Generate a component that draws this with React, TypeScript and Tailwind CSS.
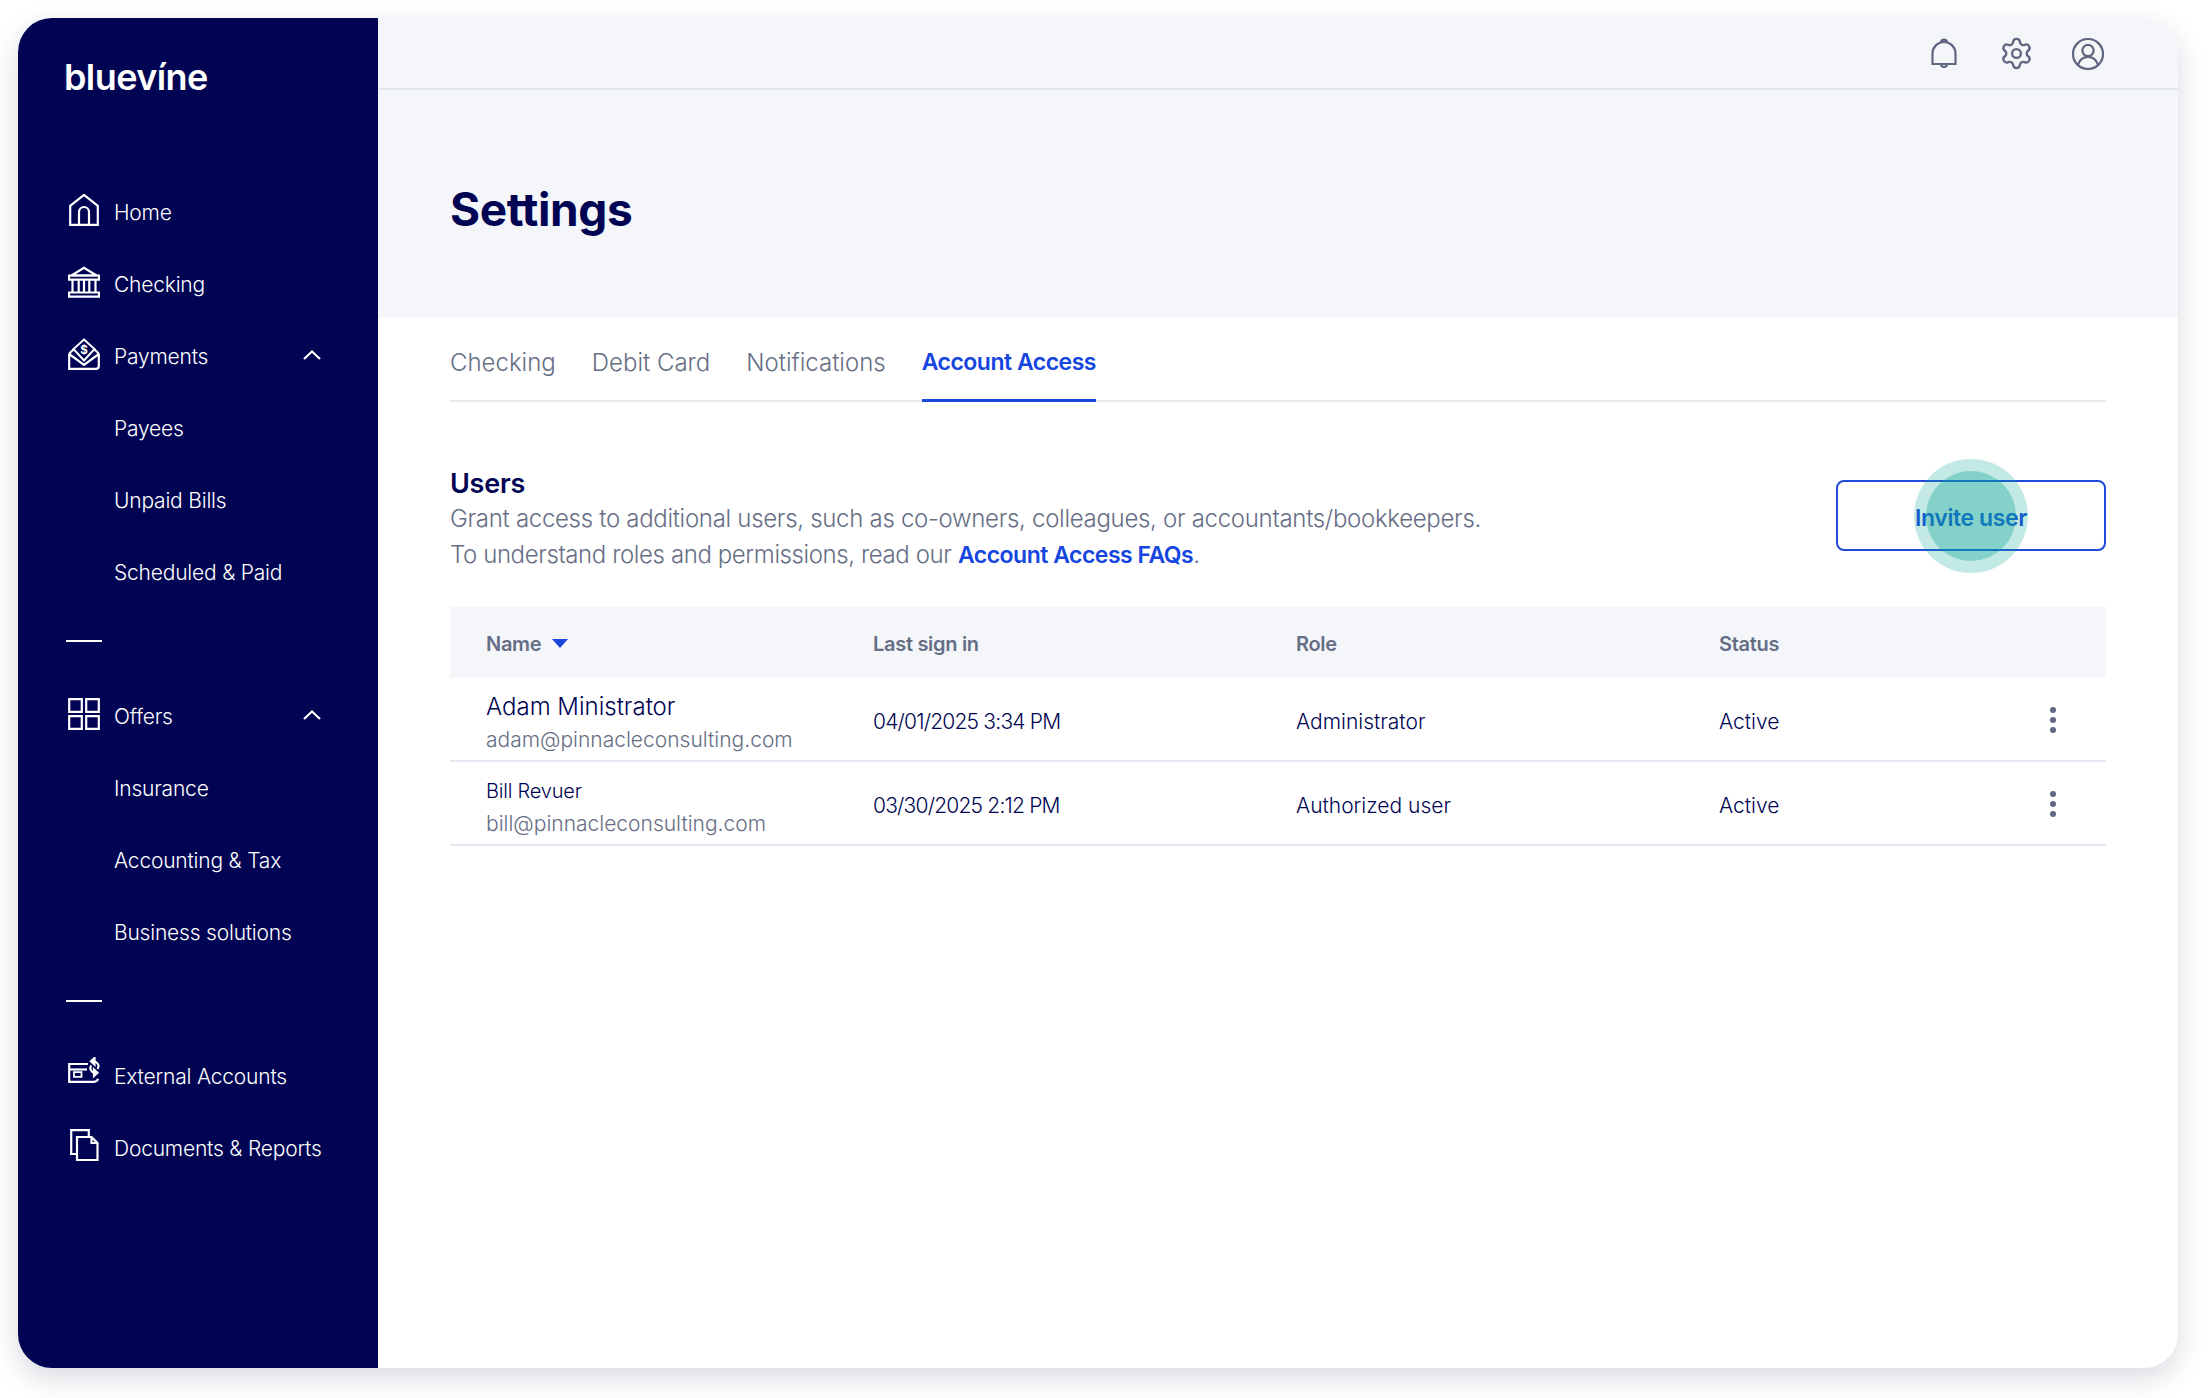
import { Settings } from "lucide-react";

const NAVY = "#000453";

function Svg({ children, w = 32, h = 32, className = "" }: { children: React.ReactNode; w?: number; h?: number; className?: string }) {
  return (
    <svg width={w} height={h} viewBox={`0 0 ${w} ${h}`} fill="none" stroke="currentColor" strokeWidth={2.2} className={`shrink-0 ${className}`}>
      {children}
    </svg>
  );
}

const HomeIcon = () => (
  <Svg>
    <path d="M2.2 30.8V11.8L16 .9l13.8 10.9v19z" />
    <path d="M11 30.8V18a5 5 0 0 1 10 0v12.8" />
  </Svg>
);
const BankIcon = () => (
  <Svg>
    <path d="M3.5 9.5 16 1.8l12.5 7.7z" />
    <path d="M1 9.5h30v4.2H1z" />
    <path d="M1 26.5h30v4.2H1z" />
    <path d="M4.5 13.7v12.8M10.7 13.7v12.8M16 13.7v12.8M21.3 13.7v12.8M27.5 13.7v12.8" />
  </Svg>
);
const PayIcon = () => (
  <Svg>
    <path d="M1.2 15.5v15.3H28a2.8 2.8 0 0 0 2.8-2.8V15.5" />
    <path d="m1.2 15.5 4.6-4.2M30.8 15.5l-4.6-4.2" />
    <path d="M1.2 16 16 27l14.8-11" />
    <path d="M16 1.5 26.5 11 16 22.5 5.5 11z" strokeWidth={2} />
    <text x="16" y="16" textAnchor="middle" fontSize="11.5" fontWeight="700" fill="currentColor" stroke="none" fontFamily="Inter,sans-serif">$</text>
  </Svg>
);
const GridIcon = () => (
  <Svg>
    <path d="M1.2 1.2h12.6v12.6H1.2zM18.2 1.2h12.6v12.6H18.2zM1.2 18.2h12.6v12.6H1.2zM18.2 18.2h12.6v12.6H18.2z" />
  </Svg>
);
const ExternalIcon = () => (
  <Svg h={26} className="mb-[8px]">
    <path d="M20 7H1.2v17.8H26c2.2 0 3.4-1 4-3" />
    <path d="M1.2 12.5H19" />
    <path d="M6 15.2h7.5v4.6H6z" strokeWidth={1.8} />
    <path d="M29.5 12c2-3.2.8-6.6-3.4-7.8" />
    <path d="M26.5 1 23 4.2l3.5 3.2z" fill="currentColor" />
    <path d="M23 8.5c-1.7 3 0 6.4 3.6 7.2" />
    <path d="m26 19 3.5-3.2L26 12.6z" fill="currentColor" />
  </Svg>
);
const DocsIcon = () => (
  <Svg className="mb-[3px]">
    <path d="M9 25H3.2V1.2h17.6V8" />
    <path d="M9 8h14.5l6 6v17H9z" />
    <path d="M23.5 8v6h6" />
  </Svg>
);
const Chevron = () => (
  <svg width="18" height="10" viewBox="0 0 18 10" fill="none" stroke="white" strokeWidth={2.2} className="shrink-0">
    <path d="M1 9 9 1.5 17 9" />
  </svg>
);

function NavRow({ icon, label, chevron }: { icon?: React.ReactNode; label: string; chevron?: boolean }) {
  return (
    <div className="flex h-[72px] w-[253px] items-center text-white">
      <div className="mb-[2px] flex w-[46px] shrink-0 items-center">{icon}</div>
      <span className="flex-1 whitespace-nowrap pt-[3px] text-[21px] font-light tracking-[-0.2px]">{label}</span>
      {chevron && <Chevron />}
    </div>
  );
}

const NavDivider = () => (
  <div className="flex h-[72px] items-center">
    <div className="-ml-[2px] -mt-[4px] h-[2px] w-[36px] bg-white" />
  </div>
);

function Sidebar() {
  return (
    <aside className="w-[360px] shrink-0 bg-[#000453]">
      <div className="pl-[46px] pt-[33px] text-[36px] font-semibold leading-[52px] tracking-[-0.6px] text-white">bluevíne</div>
      <nav className="pl-[50px] pt-[72px]">
        <NavRow icon={<HomeIcon />} label="Home" />
        <NavRow icon={<BankIcon />} label="Checking" />
        <NavRow icon={<PayIcon />} label="Payments" chevron />
        <NavRow label="Payees" />
        <NavRow label="Unpaid Bills" />
        <NavRow label="Scheduled & Paid" />
        <NavDivider />
        <NavRow icon={<GridIcon />} label="Offers" chevron />
        <NavRow label="Insurance" />
        <NavRow label="Accounting & Tax" />
        <NavRow label="Business solutions" />
        <NavDivider />
        <NavRow icon={<ExternalIcon />} label="External Accounts" />
        <NavRow icon={<DocsIcon />} label="Documents & Reports" />
      </nav>
    </aside>
  );
}

function TopBar() {
  return (
    <header className="flex h-[72px] items-center justify-end gap-[40px] border-b-2 border-[#e3e8f1] pt-[1px] pr-[74px] text-[#5f6780]">
      <Svg>
        <path d="M4.5 26V15.5a11.5 11.5 0 0 1 23 0V26z" />
        <path d="M13 4.6a3 3 0 0 1 6 0" />
        <path d="M13 26a3 3 0 0 0 6 0" />
      </Svg>
      <div className="flex h-8 w-8 items-center justify-center">
        <Settings className="h-[35px] w-[35px] shrink-0" strokeWidth={1.6} />
      </div>
      <Svg>
        <circle cx="16" cy="16" r="15" />
        <circle cx="16" cy="12.5" r="5.6" />
        <path d="M6 26.5c2-5 6-7.6 10-7.6s8 2.6 10 7.6" />
      </Svg>
    </header>
  );
}

const tabs = ["Checking", "Debit Card", "Notifications"];

function Tabs() {
  return (
    <div className="flex h-[84px] items-stretch gap-[36px] border-b-2 border-[#e8ecf2]">
      {tabs.map((t) => (
        <div key={t} className="flex items-center pt-[7px] text-[24px] font-light text-[#666e85]">{t}</div>
      ))}
      <div className="-mb-[2px] flex items-center border-b-[3px] border-[#1a47dc] pt-[7px] text-[23px] font-semibold tracking-[-0.5px] text-[#1546e0]">Account Access</div>
    </div>
  );
}

function UsersHead() {
  return (
    <div className="flex items-start justify-between pt-[64px]">
      <div>
        <h2 className="text-[27px] font-semibold leading-[36px] tracking-[-0.25px] text-[#000453]">Users</h2>
        <p className="-mt-[1px] text-[24px] font-light leading-[36px] tracking-[-0.3px] text-[#666e85]">Grant access to additional users, such as co-owners, colleagues, or accountants/bookkeepers.</p>
        <p className="text-[24px] font-light leading-[36px] tracking-[-0.4px] text-[#666e85]">
          To understand roles and permissions, read our <span className="text-[23px] font-semibold tracking-[-0.5px] text-[#1546e0]">Account Access FAQs</span>.
        </p>
      </div>
      <div className="relative mt-[14px] flex h-[71px] w-[270px] items-center justify-center rounded-[8px] border-2 border-[#1f4bd8] pt-[6px] text-[23px] font-semibold tracking-[-0.4px] text-[#1546e0]">
        Invite user
        <div className="absolute left-1/2 top-1/2 flex h-[114px] w-[114px] -translate-x-1/2 -translate-y-1/2 items-center justify-center rounded-full bg-[#0fa797]/25">
          <div className="h-[90px] w-[90px] rounded-full bg-[#0fa797]/35" />
        </div>
      </div>
    </div>
  );
}

const Kebab = () => (
  <div className="mb-[5px] flex flex-col items-center gap-[4px] pr-[50px]">
    <span className="h-[6px] w-[6px] rounded-full bg-[#5f6780]" />
    <span className="h-[6px] w-[6px] rounded-full bg-[#5f6780]" />
    <span className="h-[6px] w-[6px] rounded-full bg-[#5f6780]" />
  </div>
);

const gridCols = "grid grid-cols-[423px_423px_423px_1fr] items-center";

function Row({ name, nameClass, email, date, role }: { name: string; nameClass: string; email: string; date: string; role: string }) {
  return (
    <div className={`${gridCols} h-[84px] border-b-2 border-[#e3e8f1] text-[#000453]`}>
      <div className="pl-[36px] pt-[8px]">
        <div className={`${nameClass} font-light leading-[34px]`}>{name}</div>
        <div className="text-[21px] font-light leading-[32px] text-[#666e85]">{email}</div>
      </div>
      <div className="pt-[6px] text-[21px] font-light tracking-[-0.8px]">{date}</div>
      <div className="pt-[6px] text-[21px] font-light">{role}</div>
      <div className="flex items-center justify-between pt-[6px] text-[21px] font-light">
        <span>Active</span>
        <Kebab />
      </div>
    </div>
  );
}

function UsersTable() {
  return (
    <div className="mt-[34px]">
      <div className={`${gridCols} h-[71px] bg-[#f4f6fa] pt-[2px] text-[20px] font-semibold tracking-[-0.3px] text-[#666e85]`}>
        <div className="flex items-center gap-[11px] pl-[36px]">
          Name
          <svg width="16" height="9" viewBox="0 0 16 9" className="-mt-[1px] shrink-0"><path d="M0 0h16L8 9z" fill="#1a47dc" /></svg>
        </div>
        <div>Last sign in</div>
        <div>Role</div>
        <div>Status</div>
      </div>
      <Row name="Adam Ministrator" nameClass="text-[24px]" email="adam@pinnacleconsulting.com" date="04/01/2025 3:34 PM" role="Administrator" />
      <Row name="Bill Revuer" nameClass="text-[20px] tracking-[-0.2px]" email="bill@pinnacleconsulting.com" date="03/30/2025 2:12 PM" role="Authorized user" />
    </div>
  );
}

export default function App() {
  return (
    <div className="min-h-[1398px] bg-white p-[18px] font-[Inter,sans-serif]">
      <div className="flex h-[1350px] w-[2160px] overflow-hidden rounded-[34px] bg-white shadow-[0_10px_28px_rgba(20,24,60,0.16)]">
        <Sidebar />
        <main className="flex-1">
          <div className="bg-[#f4f6fa]">
            <TopBar />
            <div className="flex h-[228px] items-center pl-[72px] pt-[10px]">
              <h1 className="text-[46px] font-bold tracking-[-0.4px]" style={{ color: NAVY }}>Settings</h1>
            </div>
          </div>
          <div className="px-[72px]">
            <Tabs />
            <UsersHead />
            <UsersTable />
          </div>
        </main>
      </div>
    </div>
  );
}
